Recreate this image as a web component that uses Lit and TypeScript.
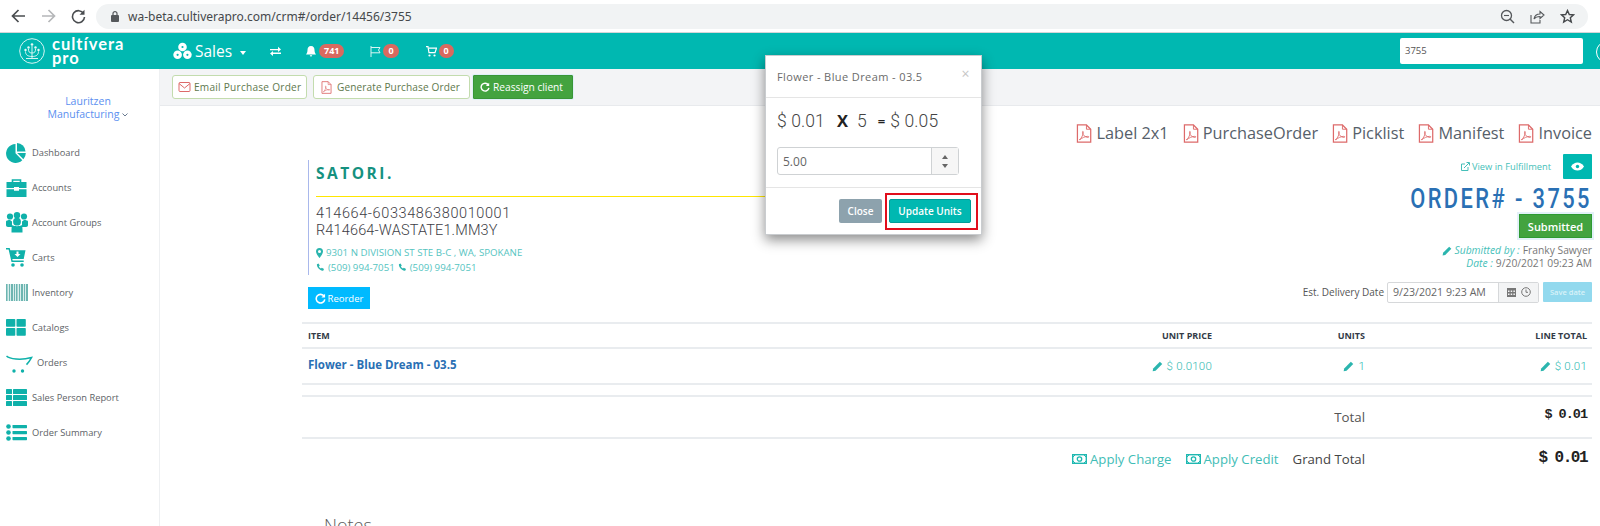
import { LitElement, html, css, svg } from "lit";
import { customElement } from "lit/decorators.js";

const ic = (w: number, h: number, vb: string, body: unknown, cls = "") =>
  html`<svg class="ic ${cls}" width=${w} height=${h} viewBox=${vb}>${body}</svg>`;

const pdf = (s = 16) => ic(s * 0.85, s, "0 0 17 20", svg`
  <path d="M1.5 1h9.5l4.5 4.5V19h-14z" fill="#fff" stroke="#dd6a6a" stroke-width="1.3"/>
  <path d="M11 1v4.5h4.5" fill="none" stroke="#dd6a6a" stroke-width="1"/>
  <path d="M3.5 16.5c2-1 3.5-4 4.2-7.5.3-1.500-.9-1.800-.9-.3 0 3 3 5.300 5.800 5.400 1.300 0 1.200-1.200-.3-1.100-3 .2-6 1.600-8 3.500z" fill="none" stroke="#dd6a6a" stroke-width=".9"/>`);

const pencil = (s = 11, c = "#2bb5ae") => ic(s, s, "0 0 12 12", svg`<path d="M8.600.8l2.600 2.600-7.300 7.300L.7 11.300l.6-3.200z" fill=${c}/>`);
const refresh = (s = 11, c = "#fff") => ic(s, s, "0 0 12 12", svg`<path d="M10 3.600A4.700 4.700 0 1 0 10.700 7" fill="none" stroke=${c} stroke-width="1.700"/><path d="M11 .8v4H7z" fill=${c}/>`);
const phone = () => ic(9, 9, "0 0 10 10", svg`<path d="M1 1.500 2.800.6l1.400 2.300-1 1c.5 1 1.300 1.800 2.300 2.300l1-1 2.400 1.500-.9 1.800C5 9.300.6 4.900 1 1.500z" fill="#2bb5ae"/>`);
const money = () => ic(15, 10, "0 0 15 10", svg`<rect x=".7" y=".7" width="13.600" height="8.600" fill="none" stroke="#1fb8b1" stroke-width="1.400"/><circle cx="7.500" cy="5" r="2.200" fill="none" stroke="#1fb8b1" stroke-width="1.300"/><path d="M1 3l2-2M12 1l2 2M1 7l2 2M12 9l2-2" stroke="#1fb8b1"/>`);

const navIcons: Record<string, unknown> = {
  pie: ic(21, 20, "0 0 21 20", svg`<path d="M9.500 1a9.500 9.500 0 1 0 6.800 16.200L9.500 10.300z" fill="#0fb1aa"/><path d="M11 0a9 9 0 0 1 8.500 8.500H11z" fill="#0fb1aa"/><path d="M11.200 10h8.600a9 9 0 0 1-2.400 6.200z" fill="#0fb1aa"/>`),
  case: ic(21, 18, "0 0 21 18", svg`<path d="M6.500 3V1h8v2" fill="none" stroke="#0fb1aa" stroke-width="1.600"/><path d="M.5 3h20v6H13v-1H8v1H.5z" fill="#0fb1aa"/><path d="M.5 10.300H8v1.500h5v-1.500h7.500V18H.5z" fill="#0fb1aa"/>`),
  group: ic(22, 21, "0 0 22 21", svg`<g fill="#0fb1aa"><circle cx="4" cy="4.500" r="3.100"/><circle cx="11" cy="3.200" r="3.200"/><circle cx="18" cy="4.500" r="3.100"/><path d="M0 9.500c0-1 2-1.500 4-1.500l2 1.500v5.500H2c-1.200 0-2-1-2-2z"/><path d="M22 9.500c0-1-2-1.500-4-1.500l-2 1.500v5.500h4c1.200 0 2-1 2-2z"/><circle cx="11" cy="9.700" r="3.900"/><path d="M6.500 13c1 1.600 8 1.600 9 0 1 1 1 3 1 7.500H5.500c0-4.500 0-6.500 1-7.500z"/></g>`),
  cart: ic(20, 19, "0 0 20 19", svg`<g fill="#0fb1aa"><path d="M0 0h3.700l.6 2.300h15.200l-1.800 8.700H6.300l.4 1.600h11v1.400H5.500L2.600 1.400H0z"/><circle cx="7" cy="17" r="1.800"/><circle cx="16" cy="17" r="1.800"/></g><path d="M10.500 3.500h2v2.500h2l-3 3-3-3h2z" fill="#fff"/>`),
  bar: ic(22, 17, "0 0 22 17", svg`<rect width="22" height="17" fill="#d9eeec"/><g fill="#6db5b1"><rect x="0" width="1.500" height="17"/><rect x="3" width="1" height="17"/><rect x="5" width="2" height="17"/><rect x="8" width="1" height="17"/><rect x="10" width="1.500" height="17"/><rect x="13" width="1" height="17"/><rect x="15" width="2" height="17"/><rect x="18" width="1" height="17"/><rect x="20" width="2" height="17"/></g>`),
  grid: ic(20, 17, "0 0 20 17", svg`<g fill="#0fb1aa"><rect width="9.300" height="7.800" rx=".8"/><rect x="10.500" width="9.300" height="7.800" rx=".8"/><rect y="9" width="9.300" height="7.800" rx=".8"/><rect x="10.500" y="9" width="9.300" height="7.800" rx=".8"/></g>`),
  orders: ic(27, 18, "0 0 27 18", svg`<path d="M.5 1c3 3 14 4.500 25 1.600-1.500 2.800-3 5-5 7" fill="none" stroke="#0fb1aa" stroke-width="1.500"/><circle cx="8" cy="16" r="1.700" fill="#0fb1aa"/><circle cx="16.500" cy="16" r="1.700" fill="#0fb1aa"/>`),
  thlist: ic(21, 17, "0 0 21 17", svg`<g fill="#0fb1aa"><rect width="6" height="5" rx=".6"/><rect x="7" width="14" height="5" rx=".6"/><rect y="6" width="6" height="5" rx=".6"/><rect x="7" y="6" width="14" height="5" rx=".6"/><rect y="12" width="6" height="5" rx=".6"/><rect x="7" y="12" width="14" height="5" rx=".6"/></g>`),
  list: ic(21, 17, "0 0 21 17", svg`<g fill="#0fb1aa"><circle cx="2.500" cy="2.500" r="2.300"/><rect x="6.500" y="1" width="14.500" height="3.200" rx=".6"/><circle cx="2.500" cy="8.500" r="2.300"/><rect x="6.500" y="7" width="14.500" height="3.200" rx=".6"/><circle cx="2.500" cy="14.500" r="2.300"/><rect x="6.500" y="13" width="14.500" height="3.200" rx=".6"/></g>`),
};

const nav = [
  ["pie", "Dashboard"], ["case", "Accounts"], ["group", "Account Groups"], ["cart", "Carts"], ["bar", "Inventory"],
  ["grid", "Catalogs"], ["orders", "Orders"], ["thlist", "Sales Person Report"], ["list", "Order Summary"],
];

@customElement("app-root")
export class AppRoot extends LitElement {
  static styles = css`
    :host { display: block; width: 1600px; height: 526px; overflow: hidden; position: relative; background: #fff; font-family: "Open Sans", sans-serif; color: #555; }
    .ic { display: block; flex: none; }
    .chrome { height: 32px; border-bottom: 1px solid #d4d6d8; display: flex; align-items: center; box-sizing: content-box; padding-left: 11px; background: #fff; }
    .cbtn { width: 30px; display: flex; }
    .cbtn.last { width: 26px; }
    .pill { width: 1492px; height: 25px; border-radius: 13px; background: #f1f3f4; display: flex; align-items: center; margin-left: -1px; padding: 0 13px 0 15px; box-sizing: border-box; font: 12px "Noto Sans", sans-serif; color: #45484b; }
    .url { flex: 1; margin-left: 9px; }
    .pillr { display: flex; gap: 15px; }
    .top { height: 36px; background: #00b8b1; display: flex; align-items: center; color: #fff; position: relative; }
    .logo { display: flex; align-items: center; margin-left: 19px; width: 154px; gap: 7px; }
    .ltxt { font: 700 16.500px/14px "Lato", sans-serif; letter-spacing: 1px; margin-top: -1px; }
    .sales { display: flex; align-items: center; font-size: 15.500px; width: 97px; gap: 3px; }
    .caret { border: 3px solid transparent; border-top: 4px solid #fff; border-bottom: 0; margin-left: 5px; margin-top: 3px; }
    .tools { display: flex; align-items: center; }
    .sp1 { width: 25px; }
    .sp2 { width: 26px; }
    .sp3 { width: 27px; }
    .badge { background: #d9695f; border-radius: 8px; font: 700 9px/14px "Open Sans", sans-serif; color: #fff; padding: 0 5px; margin-left: 2px; }
    .badge.wide { margin-left: 3px; }
    .search { margin-left: auto; margin-right: 17px; width: 183px; height: 26px; background: #fff; border-radius: 2px; box-sizing: border-box; font-size: 9.500px; line-height: 26px; padding-left: 5px; color: #555; }
    .arc { position: absolute; left: 1596px; top: 8px; width: 20px; height: 20px; border: 1.500px solid #fff; background: #00b8b1; border-radius: 50%; }
    .body { display: flex; height: 457px; }
    .side { width: 159px; flex: none; border-right: 1px solid #eef0f2; box-sizing: content-box; }
    .acct { margin-top: 26px; text-align: center; color: #5b8ff0; font-size: 10.500px; line-height: 13px; width: 176px; height: 27px; margin-bottom: 13px; }
    .acct svg { display: inline-block; margin-left: 3px; vertical-align: 1px; }
    .navi { height: 35px; display: flex; align-items: center; font-size: 9.300px; font-weight: 500; color: #5d6266; padding-left: 6px; }
    .navi .slot { width: 26px; display: flex; }
    .navi .wide { width: 31px; padding-top: 3px; }
    .main { flex: 1; min-width: 0; }
    .bar { height: 36px; background: #f3f4f6; border-bottom: 1px solid #e8eaed; display: flex; align-items: center; gap: 3px; padding-left: 12px; box-sizing: content-box; }
    .tbtn { height: 24px; display: flex; align-items: center; gap: 3px; padding-left: 5px; border: 1px solid #c3dcae; border-radius: 3px; background: #fff; font-size: 10.100px; letter-spacing: .25px; color: #60784d; box-sizing: border-box; white-space: nowrap; }
    .tbtn.email { width: 135px; margin-right: 3px; }
    .tbtn.gen { width: 157px; padding-left: 7px; gap: 5px; letter-spacing: .1px; }
    .tbtn.go { background: #43a33f; border: 1px solid #399536; color: #fff; font-weight: 500; font-size: 10.200px; width: 100px; padding-left: 6px; letter-spacing: 0; box-shadow: 0 0 0 1px #dff0f7; border-radius: 1px; }
    .content { padding: 16px 8px 0 142px; }
    .head { display: flex; justify-content: space-between; height: 200px; }
    .brand { margin: 38px 0 0 6px; }
    .bl { border-left: 1px solid #a9b8ec; height: 115px; width: 600px; padding-left: 7px; box-sizing: border-box; }
    .sat { font: 700 15.500px/26px "Open Sans", sans-serif; letter-spacing: 2.500px; color: #15917f; border-bottom: 1px solid #ffe600; box-sizing: border-box; height: 37px; }
    .lic { font: 300 14.500px/16.500px "Roboto", sans-serif; letter-spacing: .15px; color: #3d3d45; margin-top: 9px; height: 33px; }
    .lic span { letter-spacing: .6px; }
    .addr { font-size: 9.700px; line-height: 14.500px; color: #55c4bf; display: flex; align-items: center; gap: 3px; }
    .addr.first { margin-top: 7px; }
    .reorder { margin-top: 12px; width: 62px; height: 22px; background: #00baff; color: #fff; display: flex; align-items: center; justify-content: center; gap: 2px; font-size: 9.500px; font-weight: 400; }
    .right { display: flex; flex-direction: column; align-items: flex-end; }
    .pdfs { display: flex; height: 22px; align-items: center; font-size: 16.300px; color: #56606a; gap: 14px; }
    .pdfs span { display: flex; align-items: center; gap: 4px; }
    .view { margin-top: 10px; height: 25px; display: flex; align-items: center; font-size: 9.300px; color: #46bfb9; }
    .view .t { display: flex; align-items: center; gap: 2px; margin-right: 12px; }
    .eye { width: 29px; height: 25px; background: #00b8b1; border-radius: 1px; display: flex; align-items: center; justify-content: center; }
    .order { height: 35px; font: 500 28px/40px "Roboto", sans-serif; letter-spacing: 3.100px; color: #2a70b4; white-space: nowrap; transform: scaleX(.78); transform-origin: right center; }
    .sub { width: 73px; height: 24px; background: #43a33f; border: 1px solid #2e9a33; box-shadow: 0 0 0 2px #e3f1f8; color: #fff; font-size: 11px; font-weight: 600; display: flex; align-items: center; justify-content: center; box-sizing: border-box; }
    .who { margin-top: 6px; font-size: 10.300px; line-height: 13px; color: #777; display: flex; align-items: center; justify-content: flex-end; gap: 3px; white-space: nowrap; }
    .who i { color: #46bfb9; }
    .who + .who { margin-top: 0; }
    .daterow { margin-top: 12px; display: flex; align-items: center; font-size: 10px; color: #555; height: 20px; }
    .dinp { margin-left: 3px; width: 152px; height: 21px; border: 1px solid #d6d8da; border-radius: 2px; display: flex; align-items: center; box-sizing: border-box; color: #666; padding-left: 5px; font-size: 10.600px; }
    .dinp .tx { flex: 1; white-space: nowrap; }
    .dadd { width: 39px; height: 100%; background: #f3f4f5; border-left: 1px solid #d6d8da; display: flex; align-items: center; justify-content: center; gap: 5px; }
    .save { margin-left: 4px; width: 49px; height: 20px; background: #92d9ee; color: #d8f2f8; font-size: 7.500px; font-weight: 600; display: flex; align-items: center; justify-content: center; border-radius: 1px; }
    .tbl { width: 1290px; }
    .row { display: grid; grid-template-columns: 1fr 153px 153px 222px; padding: 0 5px 0 6px; align-items: center; border-top: 2px solid #e9ecef; box-sizing: border-box; }
    .row > div { text-align: right; }
    .row > div:first-child { text-align: left; }
    .hd { height: 25px; font-size: 9px; font-weight: 700; color: #333b47; }
    .it { height: 36px; padding-bottom: 4px; }
    .name { font-size: 11.500px; font-weight: 700; color: #2a70b4; }
    .val { display: flex; justify-content: flex-end; align-items: center; gap: 4px; font: 300 11.500px "Roboto", sans-serif; letter-spacing: .2px; color: #2cb8b1; padding-top: 4px; }
    .empty { height: 12px; }
    .tot { height: 42px; }
    .lab { font-size: 13.300px; color: #555; }
    .amt { font: 700 13.500px "Liberation Mono", monospace; letter-spacing: -1px; color: #222; margin-top: -5px; }
    .grand { height: 42px; }
    .grand .links { grid-column: 1 / span 3; display: flex; justify-content: flex-end; align-items: center; font-size: 13.200px; color: #3fbdb6; gap: 14px; margin-top: -1px; }
    .grand .links span { display: flex; align-items: center; gap: 3px; }
    .grand .links .gt { color: #444; }
    .grand .amt { font-size: 16px; letter-spacing: -1.500px; margin-top: -3px; }
    .notes { margin: 34px 0 0 22px; font-size: 18px; color: #5a5a5a; font-weight: 300; }
    .modal { position: absolute; left: 765px; top: 55px; width: 217px; height: 180px; background: #fff; border: 1px solid #c9cccf; box-sizing: border-box; box-shadow: 0 5px 12px rgba(0,0,0,.45); display: flex; flex-direction: column; }
    .mh { height: 41px; border-bottom: 1px solid #e5e5e5; display: flex; align-items: center; justify-content: space-between; padding: 0 11px; font-size: 11px; letter-spacing: .4px; color: #6b6b6b; box-sizing: content-box; }
    .x { font-size: 14px; color: #c6c6c6; margin-top: -7px; }
    .mb { flex: 1; padding: 0 11px; }
    .calc { display: flex; align-items: center; height: 45px; margin-bottom: 4px; font: 300 17.500px "Roboto", sans-serif; letter-spacing: .1px; color: #444; white-space: pre; }
    .calc b { font: 700 16.500px "Open Sans", sans-serif; color: #222; }
    .calc b.m3 { font-size: 13px; }
    .calc .m1 { margin-left: 12px; }
    .calc .m2 { margin-left: 9px; }
    .calc .m3 { margin-left: 11px; }
    .calc .m4 { margin-left: 5px; }
    .num { width: 182px; height: 28px; border: 1px solid #cfd2d4; border-radius: 3px; display: flex; align-items: center; box-sizing: border-box; font-size: 12px; color: #666; padding-left: 5px; }
    .num .tx { flex: 1; }
    .spin { width: 26px; height: 100%; background: #f6f6f6; border-left: 1px solid #cfd2d4; display: flex; flex-direction: column; align-items: center; justify-content: center; gap: 5px; }
    .tri { border: 3px solid transparent; border-bottom: 4px solid #666; border-top: 0; }
    .tri.d { border-bottom: 0; border-top: 4px solid #666; }
    .mf { height: 47px; border-top: 1px solid #e5e5e5; display: flex; align-items: center; justify-content: flex-end; gap: 7px; padding: 0 10px 0 0; box-sizing: border-box; }
    .mbtn { height: 24px; font-size: 10px; font-weight: 600; color: #fff; display: flex; align-items: center; justify-content: center; border-radius: 2px; box-sizing: border-box; }
    .close { width: 43px; background: #8da2ad; }
    .upd { width: 82px; background: #00b8b1; border: 1px solid #009c98; position: relative; }
    .red { position: absolute; left: -5px; right: -8px; top: -7px; bottom: -8px; border: 2px solid #e10e1c; }
  `;

  render() {
    return html`
      <div class="chrome">
        <div class="cbtn">${ic(15, 14, "0 0 15 14", svg`<path d="M14 7H2M7.500 1 1.500 7l6 6" fill="none" stroke="#4a4d50" stroke-width="1.700"/>`)}</div>
        <div class="cbtn">${ic(15, 14, "0 0 15 14", svg`<path d="M1 7h12M7.500 1l6 6-6 6" fill="none" stroke="#b5b7b9" stroke-width="1.700"/>`)}</div>
        <div class="cbtn last">${ic(15, 15, "0 0 15 15", svg`<path d="M12.600 4.500A6 6 0 1 0 13.500 8" fill="none" stroke="#4a4d50" stroke-width="1.600"/><path d="M13.500 .8v5h-5z" fill="#4a4d50"/>`)}</div>
        <div class="pill">
          ${ic(8, 11, "0 0 8 11", svg`<rect y="4" width="8" height="7" rx="1" fill="#55585b"/><path d="M2 4V2.600a2 2 0 0 1 4 0V4" fill="none" stroke="#55585b" stroke-width="1.200"/>`)}
          <span class="url">wa-beta.cultiverapro.com/crm#/order/14456/3755</span>
          <div class="pillr">
            ${ic(15, 15, "0 0 15 15", svg`<circle cx="6.500" cy="6.500" r="5" fill="none" stroke="#55585b" stroke-width="1.300"/><path d="M10 10l4 4" stroke="#55585b" stroke-width="1.500"/><path d="M4 6.500h5" stroke="#55585b" stroke-width="1.100"/>`)}
            ${ic(15, 15, "0 0 15 15", svg`<path d="M1 6v8h9v-3" fill="none" stroke="#55585b" stroke-width="1.100"/><path d="M4 10c.5-3 3-5 6-5V2.500L14 6l-4 3.500V7.500C8 7.500 5.500 8 4 10z" fill="none" stroke="#55585b" stroke-width="1.100"/>`)}
            ${ic(15, 15, "0 0 15 15", svg`<path d="M7.500 1.500l1.800 4 4.200.4-3.200 2.800 1 4.300-3.800-2.300L3.700 13l1-4.300L1.500 5.900l4.200-.4z" fill="none" stroke="#45484b" stroke-width="1.400"/>`)}
          </div>
        </div>
      </div>
      <div class="top">
        <div class="logo">
          ${ic(26, 26, "0 0 26 26", svg`<g fill="none" stroke="#d6f5f3" stroke-width="1"><circle cx="13" cy="13" r="12.300"/><path d="M13 21V8M13 15c-3 0-3.500-1.500-3.500-4M13 15c3 0 3.500-1.500 3.500-4M13 18.500c-4 0-6.500-1.500-6.500-5M13 18.500c4 0 6.500-1.500 6.500-5M7 20.500h12"/></g><g fill="#e6f9f8"><circle cx="13" cy="6.500" r="1.300"/><circle cx="9.500" cy="9.500" r="1.200"/><circle cx="16.500" cy="9.500" r="1.200"/><circle cx="6.500" cy="12" r="1.200"/><circle cx="19.500" cy="12" r="1.200"/></g>`)}
          <div class="ltxt">cultívera<br />pro</div>
        </div>
        <div class="sales">
          ${ic(19, 18, "0 0 19 18", svg`<g fill="#fff"><circle cx="9.500" cy="5" r="4.300"/><circle cx="4.600" cy="12.800" r="4.300"/><circle cx="14.400" cy="12.800" r="4.300"/></g><g fill="#00b8b1"><circle cx="9.500" cy="5" r="1.100"/><circle cx="4.600" cy="12.800" r="1.100"/><circle cx="14.400" cy="12.800" r="1.100"/></g>`)}
          <span>Sales</span><i class="caret"></i>
        </div>
        <div class="tools">
          ${ic(11, 10, "0 0 11 10", svg`<path d="M0 3h8V.8L11 3.500 8 6V4.300H0zM11 6.500H3V5L0 7.500 3 10V8h8z" fill="#fff"/>`)}
          <span class="sp1"></span>
          ${ic(10, 11, "0 0 10 11", svg`<path d="M5 0c2.500 0 3.500 2 3.500 4 0 2 .5 3 1.500 4.500H0C1 7 1.500 6 1.500 4 1.500 2 2.500 0 5 0zM3.800 9.300h2.400A1.200 1.200 0 0 1 3.800 9.300z" fill="#fff"/>`)}
          <span class="badge wide">741</span>
          <span class="sp2"></span>
          ${ic(11, 11, "0 0 11 11", svg`<path d="M1 0v11M1 1.500h9L8.500 4 10 6.800H1" fill="none" stroke="#d9f5f3" stroke-width="1"/>`)}
          <span class="badge">0</span>
          <span class="sp3"></span>
          ${ic(11, 11, "0 0 11 11", svg`<path d="M0 .7h2l1 6h6l1.500-4.500H3" fill="none" stroke="#fff" stroke-width="1.200"/><circle cx="3.500" cy="9.500" r="1.100" fill="#fff"/><circle cx="8.500" cy="9.500" r="1.100" fill="#fff"/>`)}
          <span class="badge">0</span>
        </div>
        <div class="search">3755</div>
        <div class="arc"></div>
      </div>
      <div class="body">
        <div class="side">
          <div class="acct">Lauritzen<br />Manufacturing${ic(6, 4, "0 0 6 4", svg`<path d="M.5.500 3 3 5.500.5" fill="none" stroke="#6a7a90"/>`)}</div>
          ${nav.map(([k, t]) => html`<div class="navi"><span class="slot ${k === "orders" ? "wide" : ""}">${navIcons[k]}</span>${t}</div>`)}
        </div>
        <div class="main">
          <div class="bar">
            <div class="tbtn email">${ic(13, 10, "0 0 12 10", svg`<rect x=".5" y=".5" width="11" height="9" rx="1" fill="none" stroke="#dd6a6a"/><path d="M.5 1.500 6 6l5.500-4.500" fill="none" stroke="#dd6a6a"/>`)}Email Purchase Order</div>
            <div class="tbtn gen">${pdf(13)}Generate Purchase Order</div>
            <div class="tbtn go">${refresh(10)}Reassign client</div>
          </div>
          <div class="content">
            <div class="head">
              <div class="brand">
                <div class="bl">
                  <div class="sat">SATORI.</div>
                  <div class="lic"><span>414664-6033486380010001</span><br />R414664-WASTATE1.MM3Y</div>
                  <div class="addr first">${ic(7, 10, "0 0 7 10", svg`<path d="M3.500 0A3.500 3.500 0 0 0 0 3.500C0 6 3.500 10 3.500 10S7 6 7 3.500A3.500 3.500 0 0 0 3.500 0zm0 5a1.500 1.500 0 1 1 0-3 1.500 1.500 0 0 1 0 3z" fill="#2bb5ae"/>`)}9301 N DIVISION ST STE B-C , WA, SPOKANE</div>
                  <div class="addr">${phone()}(509) 994-7051 ${phone()}(509) 994-7051</div>
                </div>
                <div class="reorder">${refresh(11)}Reorder</div>
              </div>
              <div class="right">
                <div class="pdfs">
                  <span>${pdf(19)}Label 2x1</span><span>${pdf(19)}PurchaseOrder</span><span>${pdf(19)}Picklist</span><span>${pdf(19)}Manifest</span><span>${pdf(19)}Invoice</span>
                </div>
                <div class="view">
                  <span class="t">${ic(9, 9, "0 0 9 9", svg`<path d="M7 5v3.500H.5V2H4" fill="none" stroke="#46bfb9"/><path d="M3 6l5-5M5.500.5H8.500v3" fill="none" stroke="#46bfb9"/>`)}View in Fulfillment</span>
                  <div class="eye">${ic(13, 9, "0 0 13 9", svg`<path d="M0 4.500C2 1.500 4 .5 6.500.5S11 1.500 13 4.500C11 7.500 9 8.500 6.500 8.500S2 7.500 0 4.500z" fill="#fff"/><circle cx="6.500" cy="4.500" r="1.700" fill="#00b8b1"/>`)}</div>
                </div>
                <div class="order">ORDER# - 3755</div>
                <div class="sub">Submitted</div>
                <div class="who">${pencil(10)}<i>Submitted by :</i> Franky Sawyer</div>
                <div class="who"><i>Date :</i> 9/20/2021 09:23 AM</div>
                <div class="daterow">
                  Est. Delivery Date
                  <div class="dinp">
                    <span class="tx">9/23/2021 9:23 AM</span>
                    <div class="dadd">
                      ${ic(9, 10, "0 0 9 10", svg`<rect y="1" width="9" height="9" fill="#777"/><g fill="#f3f4f5"><rect x="1" y="3.500" width="1.500" height="1.500"/><rect x="3.700" y="3.500" width="1.500" height="1.500"/><rect x="6.400" y="3.500" width="1.500" height="1.500"/><rect x="1" y="6.500" width="1.500" height="1.500"/><rect x="3.700" y="6.500" width="1.500" height="1.500"/><rect x="6.400" y="6.500" width="1.500" height="1.500"/></g>`)}
                      ${ic(10, 10, "0 0 10 10", svg`<circle cx="5" cy="5" r="4.300" fill="none" stroke="#777" stroke-width="1"/><path d="M5 2.500V5.300h2" fill="none" stroke="#777"/>`)}
                    </div>
                  </div>
                  <div class="save">Save date</div>
                </div>
              </div>
            </div>
            <div class="tbl">
              <div class="row hd"><div>ITEM</div><div>UNIT PRICE</div><div>UNITS</div><div>LINE TOTAL</div></div>
              <div class="row it"><div class="name">Flower - Blue Dream - 03.5</div><div class="val">${pencil()}$ 0.0100</div><div class="val">${pencil()}1</div><div class="val">${pencil()}$ 0.01</div></div>
              <div class="row empty"></div>
              <div class="row tot"><div></div><div></div><div class="lab">Total</div><div class="amt">$ 0.01</div></div>
              <div class="row grand"><div class="links"><span>${money()}Apply Charge</span><span>${money()}Apply Credit</span><span class="gt">Grand Total</span></div><div class="amt">$ 0.01</div></div>
            </div>
            <div class="notes">Notes</div>
          </div>
        </div>
      </div>
      <div class="modal">
        <div class="mh"><span>Flower - Blue Dream - 03.5</span><span class="x">×</span></div>
        <div class="mb">
          <div class="calc"><span>$ 0.01</span><b class="m1">X</b><span class="m2">5</span><b class="m3">=</b><span class="m4">$ 0.05</span></div>
          <div class="num"><span class="tx">5.00</span><div class="spin"><i class="tri"></i><i class="tri d"></i></div></div>
        </div>
        <div class="mf">
          <div class="mbtn close">Close</div>
          <div class="mbtn upd">Update Units<div class="red"></div></div>
        </div>
      </div>
    `;
  }
}
